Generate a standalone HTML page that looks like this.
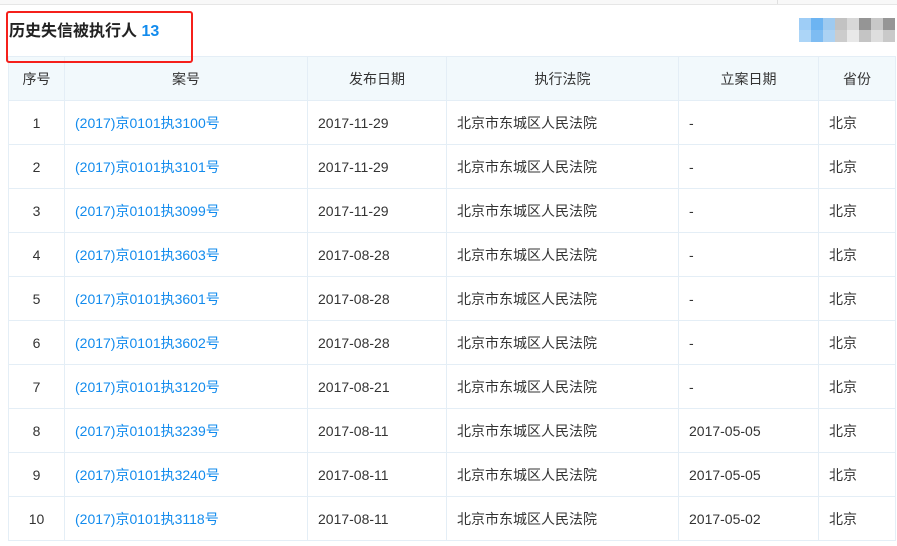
<!DOCTYPE html><html><head><meta charset="utf-8"><style>
body{margin:0;width:897px;height:546px;background:#fff;position:relative;overflow:hidden;font-family:"Liberation Sans","Noto Sans CJK SC",sans-serif;font-size:14px;color:#333}
.top{position:absolute;left:0;top:0;width:897px;height:4px;background:#f8f8f8;border-bottom:1px solid #e6e6e6}
.div{position:absolute;left:777px;top:0;width:1px;height:4px;background:#e0e0e0}
.title{position:absolute;left:9px;top:20px;font-size:16px;font-weight:bold;color:#222;line-height:24px}
.title span{color:#128bed}
.red{position:absolute;left:6px;top:11px;width:183px;height:48px;border:2px solid #f5201b;border-radius:3px;z-index:5}
table{position:absolute;left:8px;top:56px;border-collapse:collapse;table-layout:fixed}
td,th{border:1px solid #e4eef6;height:43px;padding:0 10px;font-weight:normal;white-space:nowrap}
th{background:#f2f9fc;color:#333;text-align:center}
td.c{text-align:center}
a{color:#128bed;text-decoration:none}
.px{position:absolute;top:18px;width:12px;height:12px}
</style></head><body>
<div class="top"></div><div class="div"></div>
<div class="title">历史失信被执行人 <span>13</span></div>
<div class="red"></div>
<div class="px" style="left:799px;background:#9ecdf6"></div><div class="px" style="left:811px;background:#6cb4f2"></div><div class="px" style="left:823px;background:#9ecaf0"></div><div class="px" style="left:835px;background:#c2c2c2"></div><div class="px" style="left:847px;background:#d8d8d8"></div><div class="px" style="left:859px;background:#959595"></div><div class="px" style="left:871px;background:#c8c8c8"></div><div class="px" style="left:883px;background:#969696"></div>
<div class="px" style="top:30px;left:799px;background:#acd5f7"></div><div class="px" style="top:30px;left:811px;background:#7ebcf2"></div><div class="px" style="top:30px;left:823px;background:#acd2f3"></div><div class="px" style="top:30px;left:835px;background:#cccccc"></div><div class="px" style="top:30px;left:847px;background:#e8e8e8"></div><div class="px" style="top:30px;left:859px;background:#c4c4c4"></div><div class="px" style="top:30px;left:871px;background:#dedede"></div><div class="px" style="top:30px;left:883px;background:#c9c9c9"></div>
<table>
<colgroup><col style="width:56px"><col style="width:243px"><col style="width:139px"><col style="width:232px"><col style="width:140px"><col style="width:77px"></colgroup>
<tr><th>序号</th><th>案号</th><th>发布日期</th><th>执行法院</th><th>立案日期</th><th>省份</th></tr>
<tr><td class="c">1</td><td><a>(2017)京0101执3100号</a></td><td>2017-11-29</td><td>北京市东城区人民法院</td><td>-</td><td>北京</td></tr>
<tr><td class="c">2</td><td><a>(2017)京0101执3101号</a></td><td>2017-11-29</td><td>北京市东城区人民法院</td><td>-</td><td>北京</td></tr>
<tr><td class="c">3</td><td><a>(2017)京0101执3099号</a></td><td>2017-11-29</td><td>北京市东城区人民法院</td><td>-</td><td>北京</td></tr>
<tr><td class="c">4</td><td><a>(2017)京0101执3603号</a></td><td>2017-08-28</td><td>北京市东城区人民法院</td><td>-</td><td>北京</td></tr>
<tr><td class="c">5</td><td><a>(2017)京0101执3601号</a></td><td>2017-08-28</td><td>北京市东城区人民法院</td><td>-</td><td>北京</td></tr>
<tr><td class="c">6</td><td><a>(2017)京0101执3602号</a></td><td>2017-08-28</td><td>北京市东城区人民法院</td><td>-</td><td>北京</td></tr>
<tr><td class="c">7</td><td><a>(2017)京0101执3120号</a></td><td>2017-08-21</td><td>北京市东城区人民法院</td><td>-</td><td>北京</td></tr>
<tr><td class="c">8</td><td><a>(2017)京0101执3239号</a></td><td>2017-08-11</td><td>北京市东城区人民法院</td><td>2017-05-05</td><td>北京</td></tr>
<tr><td class="c">9</td><td><a>(2017)京0101执3240号</a></td><td>2017-08-11</td><td>北京市东城区人民法院</td><td>2017-05-05</td><td>北京</td></tr>
<tr><td class="c">10</td><td><a>(2017)京0101执3118号</a></td><td>2017-08-11</td><td>北京市东城区人民法院</td><td>2017-05-02</td><td>北京</td></tr>
</table>
</body></html>
